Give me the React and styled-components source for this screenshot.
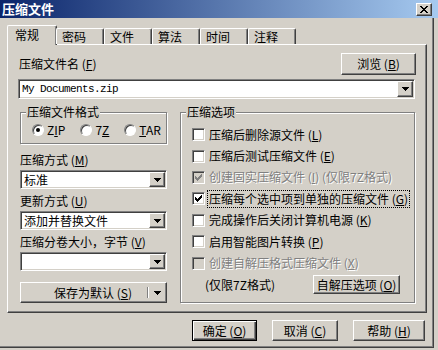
import React from 'react';
import styled, { createGlobalStyle, css } from 'styled-components';

const GlobalStyle = createGlobalStyle`
  html, body { margin: 0; padding: 0; background: #d4d0c8; }
  body {
    width: 438px; height: 350px; overflow: hidden;
    font-family: "Noto Sans CJK SC", "Noto Sans", sans-serif;
    font-size: 12px; color: #000;
  }
  * { box-sizing: border-box; }
`;

const raised = css`
  background: #d4d0c8;
  border: 1px solid;
  border-color: #fff #404040 #404040 #fff;
  box-shadow: inset -1px -1px #808080;
`;

const sunken = css`
  background: #fff;
  border: 1px solid;
  border-color: #808080 #fff #fff #808080;
  box-shadow: inset 1px 1px #404040, inset -1px -1px #d4d0c8;
`;

const disabledText = css`
  color: #808080;
  text-shadow: 1px 1px 0 #fff;
`;

const Window = styled.div`
  width: 438px; height: 350px;
  display: flex; flex-direction: column;
`;

const TitleBar = styled.div`
  flex: none; height: 18px;
  display: flex; align-items: center; justify-content: space-between;
  padding: 0 6px 0 2px;
  background: linear-gradient(to right, #0a246a 0%, #a6caf0 100%);
`;

const Title = styled.span`
  color: #fff; font-weight: 700; font-size: 13px; line-height: 18px;
`;

const CloseButton = styled.div`
  ${raised};
  width: 16px; height: 13px;
  display: flex; align-items: center; justify-content: center;
`;

const Body = styled.div`
  flex: none; width: 434px; height: 330px;
  display: flex; flex-direction: column;
  padding: 7px 0 0 7px;
  border-right: 1px solid #404040;
  border-bottom: 1px solid #404040;
  box-shadow: inset -1px -1px #808080;
`;

const TabStrip = styled.div`
  flex: none; height: 19px;
  display: flex; align-items: flex-end;
  padding-left: 1px;
  position: relative; z-index: 1;
`;

const Tab = styled.div`
  width: ${p => (p.$active ? 50 : 48)}px;
  height: ${p => (p.$active ? 20 : 16)}px;
  margin: ${p => (p.$active ? '0 -1px -1px' : '0')};
  padding: ${p => (p.$active ? '2px 0 0 7px' : '1px 0 0 5px')};
  line-height: 14px;
  background: #d4d0c8;
  border-top: 1px solid #fff;
  border-left: 1px solid #fff;
  border-right: 1px solid #404040;
  box-shadow: inset -1px 0 #808080;
  border-radius: 2px 2px 0 0;
  white-space: nowrap;
`;

const Panel = styled.div`
  flex: none; width: 420px; height: 269px;
  background: #d4d0c8;
  border: 1px solid;
  border-color: #fff #404040 #404040 #fff;
  box-shadow: inset -1px -1px #808080;
  padding: 8px 10px 0;
  display: flex; flex-direction: column;
`;

const FileRow = styled.div`
  display: flex; align-items: center; justify-content: space-between;
  height: 22px;
`;

const Label = styled.span`
  line-height: 14px; white-space: nowrap;
  margin-left: ${p => p.$indent || 0}px;
`;

const U = styled.span`
  text-decoration: underline;
`;

const Button = styled.div`
  ${raised};
  width: ${p => p.$w}px; height: ${p => p.$h || 21}px;
  flex: none;
  display: flex; align-items: center; justify-content: center;
  line-height: 14px; white-space: nowrap;
`;

const DefaultButton = styled(Button)`
  border: 1px solid #000;
  box-shadow: inset 1px 1px #fff, inset -1px -1px #404040, inset -2px -2px #808080;
`;

const Field = styled.div`
  ${sunken};
  height: ${p => p.$h || 19}px;
  display: flex; align-items: stretch;
  padding: 1px;
`;

const Combo = styled(Field)`
  margin: 4px 1px 0 0;
`;

const FieldText = styled.span`
  flex: 1; padding-left: 2px;
  line-height: ${p => (p.$h || 15)}px;
  white-space: nowrap; overflow: hidden;
`;

const MonoText = styled(FieldText)`
  font-family: "Liberation Mono", monospace;
  font-size: 11px; letter-spacing: -0.6px;
`;

const DropButton = styled.div`
  ${raised};
  width: 16px; flex: none;
  display: flex; align-items: center; justify-content: center;
`;

const Columns = styled.div`
  display: flex; gap: 13px;
  margin: 13px 1px 0 2px;
`;

const LeftCol = styled.div`
  width: 147px; flex: none;
  display: flex; flex-direction: column;
`;

const GroupBox = styled.div`
  border: 1px solid #808080;
  box-shadow: 1px 1px #fff, inset 1px 1px #fff;
  display: flex; flex-direction: column;
  flex: ${p => (p.$grow ? 1 : 'none')};
  min-width: 0;
`;

const GroupTitle = styled.div`
  align-self: flex-start;
  margin: -8px 0 0 5px; padding: 0 1px;
  background: #d4d0c8;
  line-height: 14px; white-space: nowrap;
`;

const RadioRow = styled.div`
  display: flex; align-items: center; gap: 15px;
  height: 14px; margin: 4px 0 6px; padding-left: 11px;
`;

const RadioItem = styled.div`
  display: flex; align-items: center; gap: 3px;
  line-height: 14px; white-space: nowrap;
`;

const RadioCircle = styled.span`
  width: 12px; height: 12px; flex: none;
  border-radius: 50%;
  background: #fff;
  border: 1px solid;
  border-color: #808080 #fff #fff #808080;
  box-shadow: inset 1px 1px #404040;
  display: flex; align-items: center; justify-content: center;
`;

const RadioDot = styled.span`
  width: 4px; height: 4px; border-radius: 50%; background: #000;
`;

const FieldLabel = styled.div`
  height: 20px; line-height: 20px; white-space: nowrap;
  margin-top: ${p => p.$gap}px;
`;

const SplitButton = styled(Button)`
  margin-top: 11px;
  justify-content: flex-start;
`;

const SplitMain = styled.span`
  flex: 1; text-align: center; padding-left: 18px;
`;

const SplitDivider = styled.span`
  width: 2px; height: 11px; flex: none;
  border-left: 1px solid #808080; border-right: 1px solid #fff;
`;

const SplitArrow = styled.span`
  width: 17px; flex: none;
  display: flex; align-items: center; justify-content: center;
`;

const CheckList = styled.div`
  display: flex; flex-direction: column;
  margin-top: 5px;
`;

const CheckRow = styled.div`
  display: flex; align-items: center; gap: 4px;
  height: 21.4px; padding-left: 11px;
`;

const CheckBox = styled.span`
  ${sunken};
  width: 13px; height: 13px; flex: none;
  background: ${p => (p.$disabled ? '#d4d0c8' : '#fff')};
  display: flex; align-items: center; justify-content: center;
`;

const CheckText = styled.span`
  line-height: 14px; white-space: nowrap;
  ${p => p.$disabled && disabledText};
  ${p => p.$focus && css`outline: 1px dotted #000; outline-offset: 1px;`};
`;

const NoteRow = styled.div`
  display: flex; align-items: center; justify-content: space-between;
  height: 20px; margin-top: 1px;
  padding: 0 14px 0 24px;
`;

const ButtonRow = styled.div`
  display: flex; justify-content: flex-end; gap: 15px;
  margin-top: 7px; padding-right: 8px;
`;

const Arrow = () => (
  <svg width="7" height="4" viewBox="0 0 7 4" shapeRendering="crispEdges">
    <path d="M0 0h7v1h-1v1h-1v1h-1v1h-1v-1h-1v-1h-1v-1h-1z" fill="#000" />
  </svg>
);

const Check = ({ color }) => (
  <svg width="7" height="7" viewBox="0 0 7 7" shapeRendering="crispEdges">
    <path
      d="M6 0h1v3h-1v1h-1v1h-1v1h-1v1h-1v-1h-1v-1h-1v-3h1v1h1v1h1v-1h1v-1h1z"
      fill={color}
    />
  </svg>
);

const CloseGlyph = () => (
  <svg width="8" height="7" viewBox="0 0 8 7" shapeRendering="crispEdges">
    <path d="M0 0h2v1h1v1h2v-1h1v-1h2v1h-1v1h-1v1h-1v1h1v1h1v1h1v1h-2v-1h-1v-1h-2v1h-1v1h-2v-1h1v-1h1v-1h1v-1h-1v-1h-1v-1h-1z" fill="#000" />
  </svg>
);

const Mn = ({ k }) => (
  <>
    {' ('}
    <U>{k}</U>
    {')'}
  </>
);

const Select = ({ value }) => (
  <Field $h={19}>
    <FieldText $h={15}>{value}</FieldText>
    <DropButton>
      <Arrow />
    </DropButton>
  </Field>
);

const options = [
  { text: '压缩后删除源文件', key: 'L' },
  { text: '压缩后测试压缩文件', key: 'E' },
  { text: '创建固实压缩文件', key: 'I', suffix: ' (仅限7Z格式)', checked: true, disabled: true },
  { text: '压缩每个选中项到单独的压缩文件', key: 'G', checked: true, focus: true },
  { text: '完成操作后关闭计算机电源', key: 'K' },
  { text: '启用智能图片转换', key: 'P' },
  { text: '创建自解压格式压缩文件', key: 'X', disabled: true },
];

const tabs = ['常规', '密码', '文件', '算法', '时间', '注释'];

export default function App() {
  return (
    <>
      <GlobalStyle />
      <Window>
        <TitleBar>
          <Title>压缩文件</Title>
          <CloseButton>
            <CloseGlyph />
          </CloseButton>
        </TitleBar>
        <Body>
          <TabStrip>
            {tabs.map((t, i) => (
              <Tab key={t} $active={i === 0}>
                {t}
              </Tab>
            ))}
          </TabStrip>
          <Panel>
            <FileRow>
              <Label $indent={1}>
                压缩文件名<Mn k="F" />
              </Label>
              <Button $w={75} $h={22}>
                浏览<Mn k="B" />
              </Button>
            </FileRow>
            <Combo $h={20}>
              <MonoText $h={16}>My Documents.zip</MonoText>
              <DropButton>
                <Arrow />
              </DropButton>
            </Combo>
            <Columns>
              <LeftCol>
                <GroupBox>
                  <GroupTitle>压缩文件格式</GroupTitle>
                  <RadioRow>
                    <RadioItem>
                      <RadioCircle>
                        <RadioDot />
                      </RadioCircle>
                      <span>
                        Z<U>I</U>P
                      </span>
                    </RadioItem>
                    <RadioItem>
                      <RadioCircle />
                      <span>
                        7<U>Z</U>
                      </span>
                    </RadioItem>
                    <RadioItem>
                      <RadioCircle />
                      <span>
                        <U>T</U>AR
                      </span>
                    </RadioItem>
                  </RadioRow>
                </GroupBox>
                <FieldLabel $gap={6}>
                  压缩方式<Mn k="M" />
                </FieldLabel>
                <Select value="标准" />
                <FieldLabel $gap={2}>
                  更新方式<Mn k="U" />
                </FieldLabel>
                <Select value="添加并替换文件" />
                <FieldLabel $gap={2}>
                  压缩分卷大小，字节<Mn k="V" />
                </FieldLabel>
                <Select value="" />
                <SplitButton $w={147} $h={21}>
                  <SplitMain>
                    保存为默认<Mn k="S" />
                  </SplitMain>
                  <SplitDivider />
                  <SplitArrow>
                    <Arrow />
                  </SplitArrow>
                </SplitButton>
              </LeftCol>
              <GroupBox $grow>
                <GroupTitle>压缩选项</GroupTitle>
                <CheckList>
                  {options.map(o => (
                    <CheckRow key={o.key}>
                      <CheckBox $disabled={o.disabled}>
                        {o.checked && <Check color={o.disabled ? '#808080' : '#000'} />}
                      </CheckBox>
                      <CheckText $disabled={o.disabled} $focus={o.focus}>
                        {o.text}
                        <Mn k={o.key} />
                        {o.suffix}
                      </CheckText>
                    </CheckRow>
                  ))}
                </CheckList>
                <NoteRow>
                  <Label>(仅限7Z格式)</Label>
                  <Button $w={87} $h={19}>
                    自解压选项<Mn k="O" />
                  </Button>
                </NoteRow>
              </GroupBox>
            </Columns>
          </Panel>
          <ButtonRow>
            <DefaultButton $w={65} $h={21}>
              确定<Mn k="O" />
            </DefaultButton>
            <Button $w={66} $h={21}>
              取消<Mn k="C" />
            </Button>
            <Button $w={72} $h={21}>
              帮助<Mn k="H" />
            </Button>
          </ButtonRow>
        </Body>
      </Window>
    </>
  );
}
